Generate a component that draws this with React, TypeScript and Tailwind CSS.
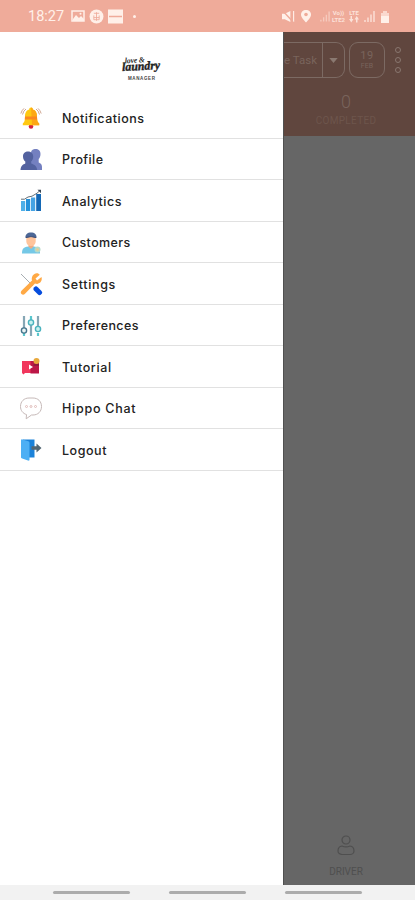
import type { ReactNode } from 'react'

type MenuItem = {
  label: string
  icon: ReactNode
  spacing: string
}

const BellIcon = () => (
  <svg viewBox="0 0 24 24" className="w-6 h-6">
    <path d="M3.5 8.5Q4.500 4.500 7 3M20.500 8.500Q19.500 4.500 17 3M1.800 7.500Q3 4 5 2.400M22.200 7.500Q21 4 19 2.400" fill="none" stroke="#c99b82" strokeWidth=".9" />
    <circle cx="12" cy="20.5" r="2.3" fill="#d5213f" />
    <path d="M12 1.6a1.8 1.8 0 0 1 1.8 2C17.4 4.5 18 8 18 11c0 4 .8 5.2 2.2 6.6v1.7H3.8v-1.7C5.2 16.2 6 15 6 11c0-3 .6-6.5 4.2-7.4A1.8 1.8 0 0 1 12 1.6z" fill="#ffc811" />
    <path d="M12 1.6a1.8 1.8 0 0 1 1.8 2C17.4 4.5 18 8 18 11c0 4 .8 5.2 2.2 6.6v1.7H13z" fill="#fda714" />
    <path d="M6 10.5h12l.2 3H5.8z" fill="#fb871f" />
  </svg>
)

const ProfileIcon = () => (
  <svg viewBox="0 0 24 24" className="w-6 h-6">
    <path d="M12 5.500C12 2 14 1 16.700 1s4.800 1.500 4.800 5c0 2.500-.8 4-1.800 5v3.500c1.800 1 3.300 1.500 3.300 4.500v3H11z" fill="#7480c0" />
    <path d="M4 8.500c0-3.500 2.200-5 5-5s5.200 1.500 5.200 5c0 2.500-1 4-2 5v2c2.300 1 5.300 1.500 6 6.500H1.500c.4-4.500 2.500-5.500 4.800-6.500v-2C5 12.500 4 11 4 8.500z" fill="#53629f" />
  </svg>
)

const AnalyticsIcon = () => (
  <svg viewBox="0 0 24 24" className="w-6 h-6">
    <path d="M2 12h4.200v10H2z" fill="#4eafe8" />
    <path d="M7 10h4.200v12H7z" fill="#2491da" />
    <path d="M12 8.500h4.200V22H12z" fill="#45a3e4" />
    <path d="M17.200 5H22v17h-4.800z" fill="#1468b5" />
    <path d="M2 10.200h3.500L9 8l4-.8 5-3L20.500 2" fill="none" stroke="#626d76" strokeWidth="1" />
    <path d="M18.500.7H22v3.500z" fill="#384653" />
  </svg>
)

const CustomerIcon = () => (
  <svg viewBox="0 0 24 24" className="w-6 h-6">
    <path d="M3 22.500c0-5.500 2-7 9-7s9 1.500 9 7z" fill="#75c8e6" />
    <path d="M9.500 12h5v3.500L12 18l-2.500-2.500z" fill="#efab82" />
    <path d="M7.300 6h9.400v4.500c0 2.500-2 4.500-4.700 4.500s-4.700-2-4.700-4.500z" fill="#ffc49b" />
    <path d="M6.500 7C6 3.500 8.500 1.500 12 1.500s6 2 5.500 5.500L12 5.500z" fill="#4c6796" />
    <path d="M7 6.500q5-1.800 10 0" fill="none" stroke="#3b4a72" strokeWidth="1" />
    <circle cx="18.500" cy="18.500" r="3" fill="#b5dac9" />
    <circle cx="18.500" cy="18.500" r="1.300" fill="#edcc8f" />
  </svg>
)

const SettingsIcon = () => (
  <svg viewBox="0 0 24 24" className="w-6 h-6">
    <path d="M2 2l12 12" stroke="#a7adb2" strokeWidth="1" />
    <path d="M17 17l3.500 3.500" stroke="#064ddd" strokeWidth="5" strokeLinecap="round" />
    <path d="M20.800 2.800l-4.300 3.800 1.500 2 4.500-3.500c1 3.500-1 6.500-4.300 6.800-1 0-1.600-.2-2.200-.4L6 21.700c-1.200 1.200-2.500 1.200-3.500.2s-1-2.300.2-3.500L13 8.500c-1-3.500 1.500-7.500 5-7.300 1.200 0 2 .6 2.800 1.600z" fill="#ffa945" />
  </svg>
)

const PreferencesIcon = () => (
  <svg viewBox="0 0 24 24" className="w-6 h-6" fill="none">
    <path d="M5 2v12M12 10v12M19 2v12" stroke="#86a7b5" strokeWidth="2.2" />
    <path d="M12 2v5M5 19v3M19 19v3" stroke="#5ac6cd" strokeWidth="2.2" />
    <circle cx="5" cy="16.500" r="2.600" fill="#e8f3f4" stroke="#46758c" strokeWidth="1.4" />
    <circle cx="12" cy="8.500" r="2.600" fill="#c9f0ef" stroke="#4ab3be" strokeWidth="1.4" />
    <circle cx="19" cy="15" r="2.600" fill="#c9f0ef" stroke="#4ab3be" strokeWidth="1.4" />
  </svg>
)

const TutorialIcon = () => (
  <svg viewBox="0 0 24 24" className="w-6 h-6">
    <path d="M3 6h9v12H6l-1.500 1.500L3 18z" fill="#f1375d" />
    <path d="M11.500 6H20v12.500h-8.500z" fill="#bb1747" />
    <path d="M10 9.500l4 2.500-4 2.500z" fill="#fff" />
    <circle cx="17.500" cy="6" r="3" fill="#e8a83c" />
    <path d="M14.500 9h5.500v1.800h-5.500z" fill="#8c1b3b" />
  </svg>
)

const ChatIcon = () => (
  <svg viewBox="0 0 24 24" className="w-6 h-6" fill="none">
    <path d="M10 1h4c5 0 8.500 3.500 8.500 8.500S19 18 14 18h-1.500l-5.300 3.800.3-4.200C4 16.500 1.500 13.500 1.500 9.500 1.500 4.500 5 1 10 1z" stroke="#c6b9b8" strokeWidth="1" strokeLinejoin="round" />
    <g fill="#fff" stroke="#ddb5b3" strokeWidth=".9">
      <circle cx="7.500" cy="9.500" r="1" />
      <circle cx="12" cy="9.500" r="1" />
      <circle cx="16.500" cy="9.500" r="1" />
    </g>
  </svg>
)

const LogoutIcon = () => (
  <svg viewBox="0 0 24 24" className="w-6 h-6">
    <path d="M4 1.500h11.500v18H4z" fill="#1b82d9" />
    <path d="M2 2.200c0-.9.700-1.100 1.500-.8l5.800 1.800c.8.300 1.200.8 1.200 1.500v17c0 .9-.7 1.100-1.500.8l-5.800-1.900C2.400 20.300 2 20 2 19z" fill="#4daff4" />
    <path d="M12.500 8.300h5V5.500L22.500 10l-5 4.500v-2.800h-5z" fill="#536773" />
  </svg>
)

const menuItems: MenuItem[] = [
  { label: 'Notifications', icon: <BellIcon />, spacing: 'tracking-[0.5px]' },
  { label: 'Profile', icon: <ProfileIcon />, spacing: 'tracking-[0.4px]' },
  { label: 'Analytics', icon: <AnalyticsIcon />, spacing: 'tracking-[0.5px]' },
  { label: 'Customers', icon: <CustomerIcon />, spacing: 'tracking-[0.4px]' },
  { label: 'Settings', icon: <SettingsIcon />, spacing: 'tracking-[0.65px]' },
  { label: 'Preferences', icon: <PreferencesIcon />, spacing: 'tracking-[0.4px]' },
  { label: 'Tutorial', icon: <TutorialIcon />, spacing: 'tracking-[0.6px]' },
  { label: 'Hippo Chat', icon: <ChatIcon />, spacing: 'tracking-[0.75px]' },
  { label: 'Logout', icon: <LogoutIcon />, spacing: 'tracking-[0.55px]' },
]

function SignalIcon({ dim = false }: { dim?: boolean }) {
  return (
    <svg viewBox="0 0 11 12" className={dim ? 'h-3 w-[10px] opacity-45' : 'h-3 w-[11px] opacity-75'} fill="none" stroke="currentColor" strokeWidth="1.5">
      <path d="M1 10v2M4 7.500V12M7 4.500V12M10 1v11" />
    </svg>
  )
}

function StatusBar() {
  return (
    <header className="flex h-8 shrink-0 items-center justify-between bg-[#efab9a] pl-7 pr-[25px] text-[#fff0e9]">
      <div className="flex items-center">
        <span className="w-[43px] pt-0.5 font-[Roboto,sans-serif] text-[14.5px] leading-none">18:27</span>
        <svg viewBox="0 0 14 14" className="h-3.5 w-3.5">
          <path d="M1 2h12v10H1z" fill="none" stroke="currentColor" strokeWidth="1.5" />
          <path d="M2 10l3-4 3 3 2-2 3 3v2H2z" fill="currentColor" />
          <circle cx="9.500" cy="4.800" r="1" fill="currentColor" />
        </svg>
        <svg viewBox="0 0 14 14" className="ml-1 h-[15px] w-[15px]">
          <circle cx="7" cy="7" r="6.500" fill="currentColor" />
          <path d="M4.500 4h5M7 3v8M4.500 6v4h5V6M4.500 8h5" fill="none" stroke="#efab9a" strokeWidth=".8" />
        </svg>
        <svg viewBox="0 0 15 14" className="ml-1 h-[15px] w-[15px]">
          <path d="M0 0h15v14H0z" fill="currentColor" />
          <path d="M1 7h13" stroke="#efab9a" strokeWidth="1.5" />
        </svg>
        <span className="ml-[10px] h-[3px] w-[3px] rounded-full bg-[#fff0e9]" />
      </div>
      <div className="flex items-center font-[Roboto,sans-serif] text-[6px] font-bold leading-[7px]">
        <svg viewBox="0 0 14 14" className="h-[13px] w-[13px]" fill="currentColor">
          <path d="M0 4h3l6-3v12L3 10H0z" />
          <path d="M12.500 1v12" stroke="currentColor" strokeWidth="1.2" />
          <path d="M1 1l11 12" stroke="#efab9a" strokeWidth="1.5" />
        </svg>
        <svg viewBox="0 0 12 14" className="ml-[5px] mr-[8px] h-3.5 w-3" fill="currentColor">
          <path d="M6 1C3 1 1 3 1 5.800 1 9 6 13.500 6 13.500S11 9 11 5.800C11 3 9 1 6 1z" />
          <circle cx="6" cy="5.500" r="1.800" fill="#efab9a" />
        </svg>
        <SignalIcon dim />
        <div className="ml-px flex w-[15px] flex-col items-center opacity-80">
          <span>Vo))</span>
          <span>LTE2</span>
        </div>
        <div className="ml-[2px] mr-[4px] flex w-[12px] flex-col items-center opacity-80">
          <span>LTE</span>
          <svg viewBox="0 0 10 7" className="h-[7px] w-[10px]" fill="currentColor">
            <path d="M0 3h1.500V0H3v3h1.500L2.300 6.500zM5.500 3.500L7.700 0 10 3.500H8.500v3H7v-3z" />
          </svg>
        </div>
        <SignalIcon />
        <svg viewBox="0 0 10 13" className="ml-[5px] h-[13px] w-[10px]" fill="currentColor">
          <path d="M3 1h4v2h2v10H1V3h2z" opacity=".65" />
          <path d="M1 6h8v7H1z" />
        </svg>
      </div>
    </header>
  )
}

function Logo() {
  return (
    <div className="flex h-[65px] justify-center pt-[23px]">
      <svg viewBox="0 0 42 27" className="h-[27px] w-[42px]" fill="#1e1e1e">
        <g transform="rotate(-3 20 10)" fontFamily="Liberation Serif, serif" fontStyle="italic" fontWeight="bold">
          <text x="4" y="7.500" fontSize="8" textLength="20" lengthAdjust="spacingAndGlyphs">love &amp;</text>
          <text x="1" y="15" fontSize="12" textLength="38" lengthAdjust="spacingAndGlyphs" stroke="#1e1e1e" strokeWidth=".4">laundry</text>
        </g>
        <text x="7" y="24.500" fontSize="4.5" fontFamily="Liberation Sans, sans-serif" fontWeight="bold" textLength="27" fill="#444">MANAGER</text>
      </svg>
    </div>
  )
}

function Drawer() {
  return (
    <aside className="h-full w-[283px] shrink-0 bg-white">
      <Logo />
      <nav>
        {menuItems.map((item) => (
          <a key={item.label} className="flex h-[41.5px] items-center border-b border-[#e1e1e1] pl-[19px] pt-[2px] text-[#222]">
            {item.icon}
            <span className={`ml-[19px] pt-px font-[Inter,sans-serif] text-[12.5px] font-medium leading-5 ${item.spacing}`}>{item.label}</span>
          </a>
        ))}
      </nav>
    </aside>
  )
}

function DimmedPage() {
  return (
    <main className="flex h-full min-w-0 flex-1 flex-col overflow-hidden border-l border-[#505050] bg-[#666666] font-[Roboto,sans-serif]">
      <section className="h-[104px] shrink-0 bg-[#60463e] pt-[10px] text-[#79645c]">
        <div className="flex h-9">
          <div className="flex w-[61px] shrink-0 rounded-r-[9px] border border-l-0 border-[#7c6a63]">
            <span className="flex flex-1 items-center pt-0.5 text-[11.5px]">e Task</span>
            <span className="flex w-[22px] items-center justify-center border-l border-[#7c6a63]">
              <svg viewBox="0 0 10 6" className="h-[5px] w-[9px]">
                <path d="M0 0h10L5 6z" fill="#8a7971" />
              </svg>
            </span>
          </div>
          <div className="ml-1 flex w-9 shrink-0 flex-col items-center justify-center rounded-[9px] border border-[#7c6a63]">
            <span className="text-[11px] leading-[12px] tracking-[0.5px]">19</span>
            <span className="text-[7px] leading-[9px] tracking-wide">FEB</span>
          </div>
          <div className="ml-[10px] flex flex-col items-center justify-center gap-[4px]">
            {[0, 1, 2].map((dot) => (
              <span key={dot} className="h-1.5 w-1.5 rounded-full border border-[#88766f]" />
            ))}
          </div>
        </div>
        <div className="mt-[13px] flex flex-col items-center pr-[7px]">
          <span className="text-[18px] font-light leading-[21px]">0</span>
          <span className="mt-[3px] text-[10px] leading-3 tracking-[0.3px] text-[#6d554c]">COMPLETED</span>
        </div>
      </section>
      <footer className="mt-auto flex flex-col items-center pb-[7px] pr-[7px] text-[#4f4f4f]">
        <svg viewBox="0 0 18 21" className="h-[21px] w-[18px]" fill="none" stroke="currentColor" strokeWidth="1.2">
          <circle cx="9" cy="5" r="4" />
          <path d="M5 11c2.500 1.200 5.500 1.200 8 0 2.500.3 4 2.500 4 5 0 2.200-2 3.500-4 3.500H5c-2 0-4-1.300-4-3.500 0-2.500 1.500-4.700 4-5z" />
        </svg>
        <span className="mt-[10px] text-[10px] leading-3">DRIVER</span>
      </footer>
    </main>
  )
}

export default function App() {
  return (
    <div className="flex h-[900px] w-[415px] flex-col overflow-hidden bg-white">
      <StatusBar />
      <div className="flex h-[853px] shrink-0">
        <Drawer />
        <DimmedPage />
      </div>
      <div className="flex h-[15px] items-center gap-[39px] bg-[#f2f2f2] pl-[53px]">
        <span className="h-[3px] w-[77px] rounded-full bg-[#acacac]" />
        <span className="h-[3px] w-[77px] rounded-full bg-[#acacac]" />
        <span className="h-[3px] w-[77px] rounded-full bg-[#acacac]" />
      </div>
    </div>
  )
}
